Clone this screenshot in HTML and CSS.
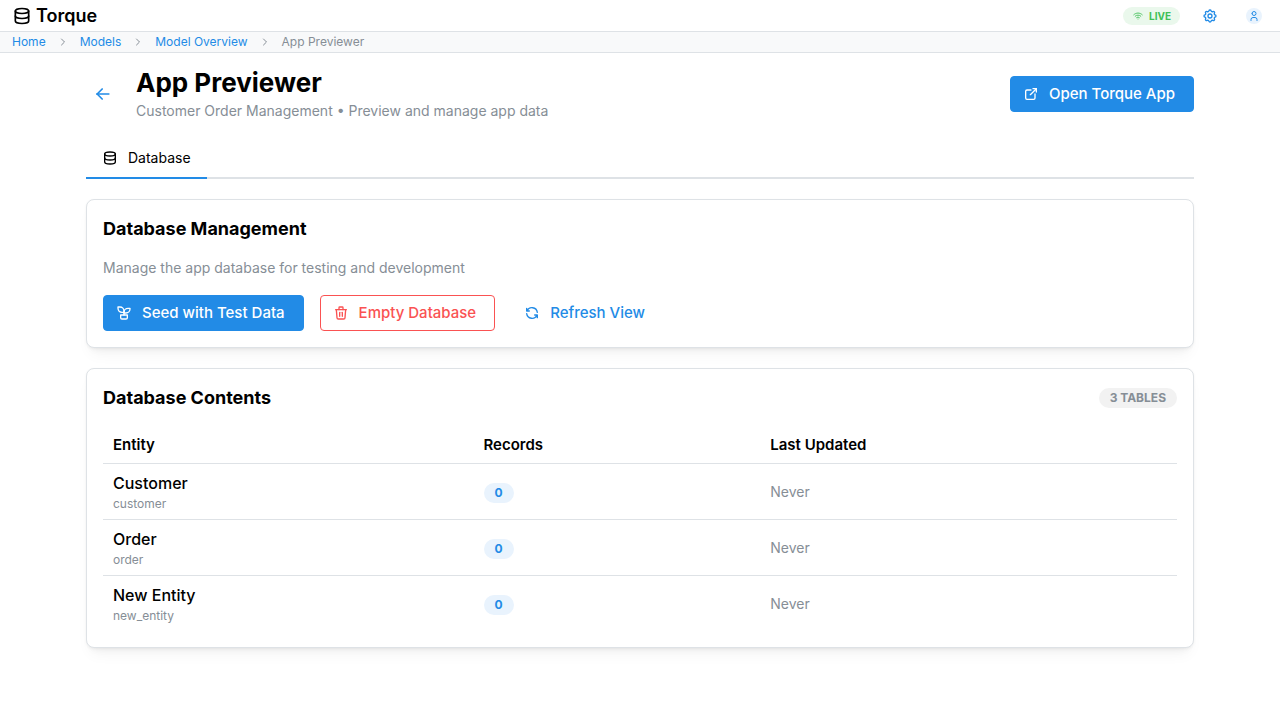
FILE: index.html
```html
<!DOCTYPE html>
<html lang="en">
<head>
<meta charset="utf-8">
<meta name="viewport" content="width=device-width, initial-scale=1">
<title>Torque</title>
<link rel="stylesheet" href="styles.css">
</head>
<body>
<svg class="sprite" aria-hidden="true">
  <symbol id="database" viewBox="0 0 24 24"><path d="M4 6a8 3 0 1 0 16 0a8 3 0 1 0 -16 0"/><path d="M4 6v6a8 3 0 0 0 16 0v-6"/><path d="M4 12v6a8 3 0 0 0 16 0v-6"/></symbol>
  <symbol id="chevron" viewBox="0 0 24 24"><path d="M9 6l6 6l-6 6"/></symbol>
</svg>
<header class="topbar">
  <div class="brand"><svg class="icon icon-20"><use href="#database"/></svg><span>Torque</span></div>
  <div class="topbar-actions">
    <span class="badge badge-live"><svg class="icon icon-12" viewBox="0 0 24 24"><path d="M12 18l.01 0"/><path d="M9.172 15.172a4 4 0 0 1 5.656 0"/><path d="M6.343 12.343a8 8 0 0 1 11.314 0"/><path d="M3.515 9.515c4.686 -4.687 12.284 -4.687 17 0"/></svg>LIVE</span>
    <button class="icon-button" type="button" aria-label="Settings"><svg class="icon icon-16" viewBox="0 0 24 24"><path d="M10.325 4.317c.426 -1.756 2.924 -1.756 3.35 0a1.724 1.724 0 0 0 2.573 1.066c1.543 -.94 3.31 .826 2.37 2.37a1.724 1.724 0 0 0 1.065 2.572c1.756 .426 1.756 2.924 0 3.35a1.724 1.724 0 0 0 -1.066 2.573c.94 1.543 -.826 3.31 -2.37 2.37a1.724 1.724 0 0 0 -2.572 1.065c-.426 1.756 -2.924 1.756 -3.35 0a1.724 1.724 0 0 0 -2.573 -1.066c-1.543 .94 -3.31 -.826 -2.37 -2.37a1.724 1.724 0 0 0 -1.065 -2.572c-1.756 -.426 -1.756 -2.924 0 -3.35a1.724 1.724 0 0 0 1.066 -2.573c-.94 -1.543 .826 -3.31 2.37 -2.37c1 .608 2.296 .07 2.572 -1.065z"/><path d="M9 12a3 3 0 1 0 6 0a3 3 0 0 0 -6 0"/></svg></button>
    <button class="icon-button" type="button" aria-label="Account"><span class="avatar"><svg class="icon icon-12" viewBox="0 0 24 24"><path d="M8 7a4 4 0 1 0 8 0a4 4 0 0 0 -8 0"/><path d="M6 21v-2a4 4 0 0 1 4 -4h4a4 4 0 0 1 4 4v2"/></svg></span></button>
  </div>
</header>
<nav class="breadcrumbs" aria-label="Breadcrumb">
  <a href="#">Home</a><svg class="icon icon-12"><use href="#chevron"/></svg>
  <a href="#">Models</a><svg class="icon icon-12"><use href="#chevron"/></svg>
  <a href="#">Model Overview</a><svg class="icon icon-12"><use href="#chevron"/></svg>
  <span>App Previewer</span>
</nav>
<main class="container">
  <div class="page-header">
    <div class="page-heading">
      <button class="back-button" type="button" aria-label="Back"><svg class="icon icon-20" viewBox="0 0 24 24"><path d="M5 12l14 0"/><path d="M5 12l6 6"/><path d="M5 12l6 -6"/></svg></button>
      <div>
        <h1>App Previewer</h1>
        <p class="muted">Customer Order Management • Preview and manage app data</p>
      </div>
    </div>
    <button class="button button-filled" type="button"><svg class="icon icon-16" viewBox="0 0 24 24"><path d="M12 6h-6a2 2 0 0 0 -2 2v10a2 2 0 0 0 2 2h10a2 2 0 0 0 2 -2v-6"/><path d="M11 13l9 -9"/><path d="M15 4h5v5"/></svg>Open Torque App</button>
  </div>
  <div class="tabs" role="tablist">
    <button class="tab" type="button" role="tab" aria-selected="true"><svg class="icon icon-16"><use href="#database"/></svg>Database</button>
  </div>
  <section class="card">
    <h2>Database Management</h2>
    <p class="muted card-text">Manage the app database for testing and development</p>
    <div class="button-row">
      <button class="button button-filled" type="button"><svg class="icon icon-16" viewBox="0 0 24 24"><path d="M7 15h10v4a2 2 0 0 1 -2 2h-6a2 2 0 0 1 -2 -2v-4z"/><path d="M12 9a6 6 0 0 0 -6 -6h-3v2a6 6 0 0 0 6 6h3"/><path d="M12 11a6 6 0 0 1 6 -6h3v1a6 6 0 0 1 -6 6h-3"/><path d="M12 15l0 -6"/></svg>Seed with Test Data</button>
      <button class="button button-danger" type="button"><svg class="icon icon-16" viewBox="0 0 24 24"><path d="M4 7l16 0"/><path d="M10 11l0 6"/><path d="M14 11l0 6"/><path d="M5 7l1 12a2 2 0 0 0 2 2h8a2 2 0 0 0 2 -2l1 -12"/><path d="M9 7v-3a1 1 0 0 1 1 -1h4a1 1 0 0 1 1 1v3"/></svg>Empty Database</button>
      <button class="button button-subtle" type="button"><svg class="icon icon-16" viewBox="0 0 24 24"><path d="M20 11a8.1 8.1 0 0 0 -15.5 -2m-.5 -4v4h4"/><path d="M4 13a8.1 8.1 0 0 0 15.5 2m.5 4v-4h-4"/></svg>Refresh View</button>
    </div>
  </section>
  <section class="card">
    <div class="card-header">
      <h2>Database Contents</h2>
      <span class="badge badge-gray">3 TABLES</span>
    </div>
    <table class="entities">
      <thead><tr><th class="col-entity" scope="col">Entity</th><th class="col-records" scope="col">Records</th><th scope="col">Last Updated</th></tr></thead>
      <tbody>
        <tr><td><div class="entity-name">Customer</div><div class="entity-key">customer</div></td><td><span class="badge badge-blue">0</span></td><td class="muted">Never</td></tr>
        <tr><td><div class="entity-name">Order</div><div class="entity-key">order</div></td><td><span class="badge badge-blue">0</span></td><td class="muted">Never</td></tr>
        <tr><td><div class="entity-name">New Entity</div><div class="entity-key">new_entity</div></td><td><span class="badge badge-blue">0</span></td><td class="muted">Never</td></tr>
      </tbody>
    </table>
  </section>
</main>
</body>
</html>
```
FILE: styles.css
```css
:root {
  --blue: #228be6;
  --gray: #868e96;
  --border: #dee2e6;
  --red: #fa5252;
}
* { box-sizing: border-box; }
body {
  margin: 0;
  background: #fff;
  color: #000;
  font-family: Inter, "Liberation Sans", sans-serif;
  font-size: 14px;
  line-height: 22px;
}
h1, h2, p { margin: 0; }
button { font: inherit; cursor: pointer; }
a { color: var(--blue); text-decoration: none; }
.sprite { display: none; }
.icon {
  flex: none;
  fill: none;
  stroke: currentColor;
  stroke-width: 2;
  stroke-linecap: round;
  stroke-linejoin: round;
}
.icon-12 { width: 12px; height: 12px; }
.icon-16 { width: 16px; height: 16px; }
.icon-20 { width: 20px; height: 20px; }
.muted { color: var(--gray); }

.topbar {
  display: flex;
  align-items: center;
  justify-content: space-between;
  height: 32px;
  padding: 0 12px;
  border-bottom: 1px solid var(--border);
}
.brand {
  display: flex;
  align-items: center;
  gap: 4px;
  font-size: 18px;
  font-weight: 600;
}
.topbar-actions { display: flex; align-items: center; gap: 16px; }
.icon-button {
  display: flex;
  align-items: center;
  justify-content: center;
  width: 28px;
  height: 28px;
  padding: 0;
  border: 0;
  background: none;
  color: var(--blue);
}
.avatar {
  display: flex;
  align-items: center;
  justify-content: center;
  width: 16px;
  height: 16px;
  border-radius: 50%;
  background: #e9f3fd;
}
.badge {
  display: inline-flex;
  align-items: center;
  justify-content: center;
  height: 20px;
  padding: 0 11px;
  border-radius: 10px;
  font-size: 12px;
  font-weight: 700;
}
.badge-live {
  gap: 5px;
  height: 18px;
  padding: 0 9px;
  background: #eaf8ec;
  color: #40c057;
  font-size: 10px;
}
.badge-live .icon { opacity: 0.9; }
.badge-gray { background: #f2f2f2; color: var(--gray); }
.badge-blue { background: #e9f3fd; color: var(--blue); vertical-align: middle; }

.breadcrumbs {
  display: flex;
  align-items: center;
  gap: 11px;
  padding: 0 12px;
  border-bottom: 1px solid var(--border);
  background: #f8f9fa;
  color: var(--gray);
  font-size: 12px;
  line-height: 20px;
}

.container {
  max-width: 1140px;
  margin: 0 auto;
  padding: 13px 16px;
}
.page-header {
  display: flex;
  align-items: center;
  justify-content: space-between;
  margin-bottom: 17px;
}
.page-heading { display: flex; align-items: center; gap: 16px; }
.back-button {
  display: flex;
  align-items: center;
  justify-content: center;
  width: 34px;
  height: 34px;
  padding: 0;
  border: 0;
  background: none;
  color: var(--blue);
}
h1 { font-size: 26px; font-weight: 700; line-height: 34px; }
h2 { font-size: 18px; font-weight: 700; line-height: 26px; }
.button {
  display: inline-flex;
  align-items: center;
  gap: 10px;
  height: 36px;
  padding: 0 18px 0 12px;
  border: 1px solid transparent;
  border-radius: 4px;
  font-size: 15px;
  font-weight: 500;
}
.button-filled { background: var(--blue); border-color: var(--blue); color: #fff; }
.button-danger { background: none; border-color: var(--red); color: var(--red); }
.button-subtle { background: none; color: var(--blue); }
.tabs {
  display: flex;
  margin-bottom: 20px;
  box-shadow: inset 0 -2px var(--border);
}
.tab {
  display: flex;
  align-items: center;
  gap: 10px;
  padding: 8px 16px;
  border: 0;
  border-bottom: 2px solid var(--blue);
  background: none;
  color: #000;
}
.card {
  margin-bottom: 20px;
  padding: 16px;
  border: 1px solid var(--border);
  border-radius: 8px;
  background: #fff;
  box-shadow: 0 1px 3px rgba(0, 0, 0, 0.05), 0 10px 15px -5px rgba(0, 0, 0, 0.05), 0 7px 7px -5px rgba(0, 0, 0, 0.04);
}
.card-text { margin: 15px 0 16px; }
.button-row { display: flex; gap: 16px; }
.card-header {
  display: flex;
  align-items: center;
  justify-content: space-between;
  margin-bottom: 16px;
}
.entities { width: 100%; border-collapse: collapse; table-layout: fixed; }
.entities th, .entities td { padding: 7px 10px; text-align: left; }
.entities tbody tr { border-top: 1px solid var(--border); }
.entities th { font-size: 15px; font-weight: 600; }
.col-entity { width: 34.5%; }
.col-records { width: 26.7%; }
.entity-name { font-size: 16px; font-weight: 500; line-height: 24px; }
.entity-key { color: var(--gray); font-size: 12px; line-height: 17px; }
```
